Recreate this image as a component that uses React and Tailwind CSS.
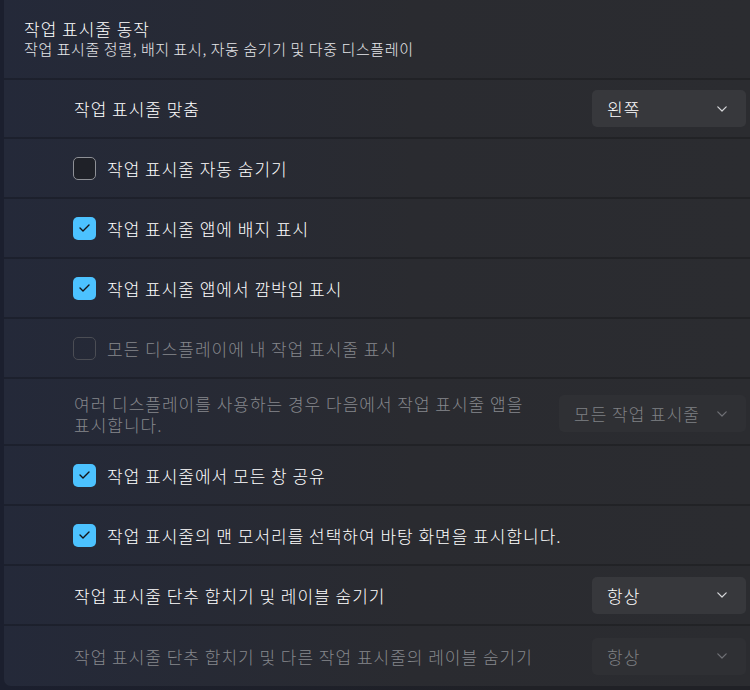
import React from "react";

const FONT = { fontFamily: '"Noto Sans CJK KR", "Noto Sans", sans-serif' };
const LBL = "text-[17px] leading-none tracking-[1px] font-light";
const SEP = " border-b-2 border-[#00000033]";

function Chevron({ dim }) {
  return (
    <svg width="10" height="6" viewBox="0 0 10 6" fill="none" className="shrink-0">
      <path d="M0.8 0.8 L5 5 L9.2 0.8" stroke={dim ? "#6f7075" : "#d6d7da"} strokeWidth="1.2" strokeLinecap="round" strokeLinejoin="round" />
    </svg>
  );
}

function Dropdown({ label, width, dim }) {
  return (
    <div
      className={
        "flex h-[37px] items-center justify-between rounded-[5px] pl-[15px] pr-[19px] " +
        (dim ? "bg-[#2f3034] text-[#7f8084]" : "bg-[#37383c] text-white")
      }
      style={{ width }}
    >
      <span className={LBL}>{label}</span>
      <Chevron dim={dim} />
    </div>
  );
}

function Checkbox({ checked, disabled }) {
  if (checked) {
    return (
      <div className="flex h-[23px] w-[23px] shrink-0 items-center justify-center rounded-[5px] bg-[#4cc2ff]">
        <svg width="11" height="8" viewBox="0 0 11 8" fill="none">
          <path d="M1 4 L4 7 L10 1" stroke="#141518" strokeWidth="1.4" strokeLinecap="round" strokeLinejoin="round" />
        </svg>
      </div>
    );
  }
  return (
    <div
      className={
        "h-[23px] w-[23px] shrink-0 rounded-[5px] border-[1.5px] " +
        (disabled ? "border-[#4b4d54] bg-transparent" : "border-[#8e9096] bg-[#1f2128]")
      }
    />
  );
}

function CheckRow({ label, checked, disabled }) {
  return (
    <div className={"flex h-[60px] items-center pl-[69px]" + SEP}>
      <Checkbox checked={checked} disabled={disabled} />
      <span className={"ml-[11px] " + LBL + " " + (disabled ? "text-[#85878c]" : "text-white")}>
        {label}
      </span>
    </div>
  );
}

export default function App() {
  return (
    <div
      className="h-[690px] w-[750px] overflow-hidden bg-[linear-gradient(to_right,#1b1f2e,#202126_70%)]"
      style={FONT}
    >
      <div className="ml-[4px] flex h-[686px] flex-col rounded-bl-[7px] bg-[linear-gradient(to_right,#242939,#2a2b30_55%,#2b2c30)]">
        <div className={"h-[80px] pl-[20px] pt-[19px]" + SEP}>
          <div className="text-[17px] font-light leading-[20px] tracking-[1px] text-white">작업 표시줄 동작</div>
          <div className="text-[15px] font-light leading-[20px] tracking-[0.6px] text-[#e6e7ea]">
            작업 표시줄 정렬, 배지 표시, 자동 숨기기 및 다중 디스플레이
          </div>
        </div>

        <div className={"flex h-[59px] items-center justify-between pl-[70px] pr-[4px]" + SEP}>
          <span className={LBL + " text-white"}>작업 표시줄 맞춤</span>
          <Dropdown label="왼쪽" width={154} />
        </div>

        <CheckRow label="작업 표시줄 자동 숨기기" />
        <CheckRow label="작업 표시줄 앱에 배지 표시" checked />
        <CheckRow label="작업 표시줄 앱에서 깜박임 표시" checked />
        <CheckRow label="모든 디스플레이에 내 작업 표시줄 표시" disabled />

        <div className={"flex h-[67px] items-center justify-between pl-[70px] pr-[4px] pt-[4px]" + SEP}>
          <div className="text-[17px] font-light leading-[21px] tracking-[1px] text-[#85878c]">
            <div>여러 디스플레이를 사용하는 경우 다음에서 작업 표시줄 앱을</div>
            <div>표시합니다.</div>
          </div>
          <Dropdown label="모든 작업 표시줄" width={187} dim />
        </div>

        <CheckRow label="작업 표시줄에서 모든 창 공유" checked />
        <CheckRow label="작업 표시줄의 맨 모서리를 선택하여 바탕 화면을 표시합니다." checked />

        <div className={"flex h-[60px] items-center justify-between pl-[70px] pr-[4px]" + SEP}>
          <span className={LBL + " text-white"}>작업 표시줄 단추 합치기 및 레이블 숨기기</span>
          <Dropdown label="항상" width={154} />
        </div>

        <div className="flex h-[60px] items-center justify-between pl-[70px] pr-[4px]">
          <span className={LBL + " text-[#85878c]"}>
            작업 표시줄 단추 합치기 및 다른 작업 표시줄의 레이블 숨기기
          </span>
          <Dropdown label="항상" width={154} dim />
        </div>
      </div>
    </div>
  );
}
